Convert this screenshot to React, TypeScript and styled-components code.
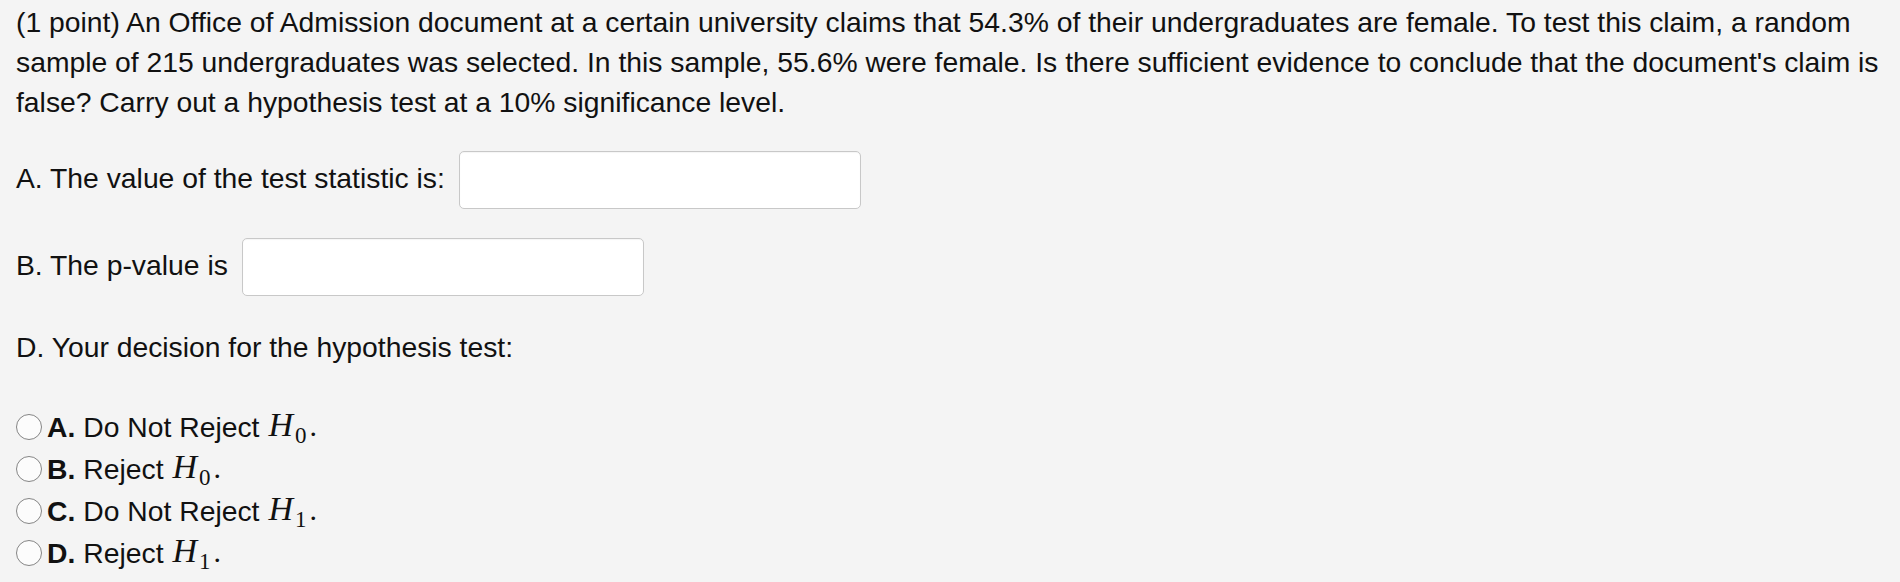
import styled, { createGlobalStyle } from 'styled-components';

const GlobalStyle = createGlobalStyle`
  html, body {
    margin: 0;
    padding: 0;
    background: #f4f4f4;
  }
  body {
    font-family: "Liberation Sans", Arial, Helvetica, sans-serif;
    color: #111;
  }
`;

const Page = styled.main`
  padding: 2px 6px 0 16px;
  font-size: 28.3px;
  line-height: 40px;
`;

const Problem = styled.p`
  margin: 0;
`;

const AnswerRow = styled.div<{ $top: number }>`
  display: flex;
  align-items: center;
  margin-top: ${({ $top }) => $top}px;
`;

// label sits a touch above the box centre, as in the original
const Label = styled.span`
  margin-bottom: 5px;
`;

const AnswerBox = styled.input`
  box-sizing: border-box;
  width: 402px;
  height: 58px;
  margin-left: 14px;
  border: 1px solid #c8c8c8;
  border-radius: 5px;
  background: #fff;
  box-shadow: inset 0 1px 1px rgba(0, 0, 0, 0.04);
  font: inherit;
`;

const Prompt = styled.div`
  margin-top: 31px;
`;

const Choices = styled.ul`
  list-style: none;
  margin: 39px 0 0;
  padding: 0;
`;

const Choice = styled.li`
  display: flex;
  align-items: center;
  height: 42px;
`;

const Radio = styled.span`
  box-sizing: border-box;
  width: 26px;
  height: 26px;
  margin-right: 5px;
  border: 1.5px solid #858585;
  border-radius: 50%;
  background: #fcfcfc;
  flex-shrink: 0;
`;

const Letter = styled.b`
  margin-right: 8px;
`;

const Math = styled.span`
  display: inline-flex;
  align-items: baseline;
  margin-left: 9px;
  font-family: "Liberation Serif", "Times New Roman", serif;
`;

const MathVar = styled.i`
  font-size: 34px;
  padding-right: 2px;
`;

const Sub = styled.span`
  font-size: 23px;
  position: relative;
  top: 7px;
`;

const Dot = styled.span`
  font-size: 30px;
  margin-left: 3px;
`;

const choices = [
  { letter: 'A.', text: 'Do Not Reject', sub: '0' },
  { letter: 'B.', text: 'Reject', sub: '0' },
  { letter: 'C.', text: 'Do Not Reject', sub: '1' },
  { letter: 'D.', text: 'Reject', sub: '1' },
];

export default function App() {
  return (
    <>
      <GlobalStyle />
      <Page>
        <Problem>
          (1 point) An Office of Admission document at a certain university claims that 54.3% of
          their undergraduates are female. To test this claim, a random sample of 215
          undergraduates was selected. In this sample, 55.6% were female. Is there sufficient
          evidence to conclude that the document's claim is false? Carry out a hypothesis test at
          a 10% significance level.
        </Problem>

        <AnswerRow $top={29}>
          <Label>A. The value of the test statistic is:</Label>
          <AnswerBox type="text" />
        </AnswerRow>

        <AnswerRow $top={29}>
          <Label>B. The p-value is</Label>
          <AnswerBox type="text" />
        </AnswerRow>

        <Prompt>D. Your decision for the hypothesis test:</Prompt>

        <Choices>
          {choices.map((c) => (
            <Choice key={c.letter}>
              <Radio />
              <Letter>{c.letter}</Letter>
              {c.text}
              <Math>
                <MathVar>H</MathVar>
                <Sub>{c.sub}</Sub>
                <Dot>.</Dot>
              </Math>
            </Choice>
          ))}
        </Choices>
      </Page>
    </>
  );
}
